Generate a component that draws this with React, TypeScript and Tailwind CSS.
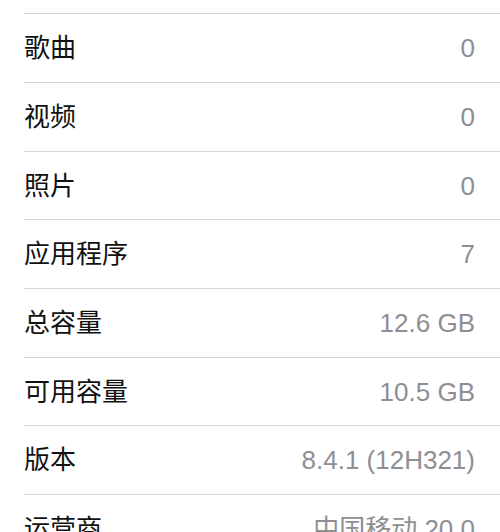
const rows: { label: string; value: string; h: string }[] = [
  { label: '歌曲', value: '0', h: 'h-[69px]' },
  { label: '视频', value: '0', h: 'h-[69px]' },
  { label: '照片', value: '0', h: 'h-[68px]' },
  { label: '应用程序', value: '7', h: 'h-[69px]' },
  { label: '总容量', value: '12.6 GB', h: 'h-[69px]' },
  { label: '可用容量', value: '10.5 GB', h: 'h-[68px]' },
  { label: '版本', value: '8.4.1 (12H321)', h: 'h-[69px]' },
  { label: '运营商', value: '中国移动 20.0', h: 'h-[69px]' },
]

export default function App() {
  return (
    <div
      className="w-[500px] h-[532px] overflow-hidden bg-white pt-[13px] pl-6"
      style={{ fontFamily: '"Liberation Sans", "Noto Sans CJK SC", sans-serif' }}
    >
      {rows.map((r) => (
        <div
          key={r.label}
          className={`${r.h} border-t border-[#d6d6d8] flex items-center justify-between pr-[25px]`}
        >
          <span className="text-[26px] text-[#111111] leading-none">{r.label}</span>
          <span className="text-[26px] text-[#8e8e93] leading-none">{r.value}</span>
        </div>
      ))}
    </div>
  )
}
